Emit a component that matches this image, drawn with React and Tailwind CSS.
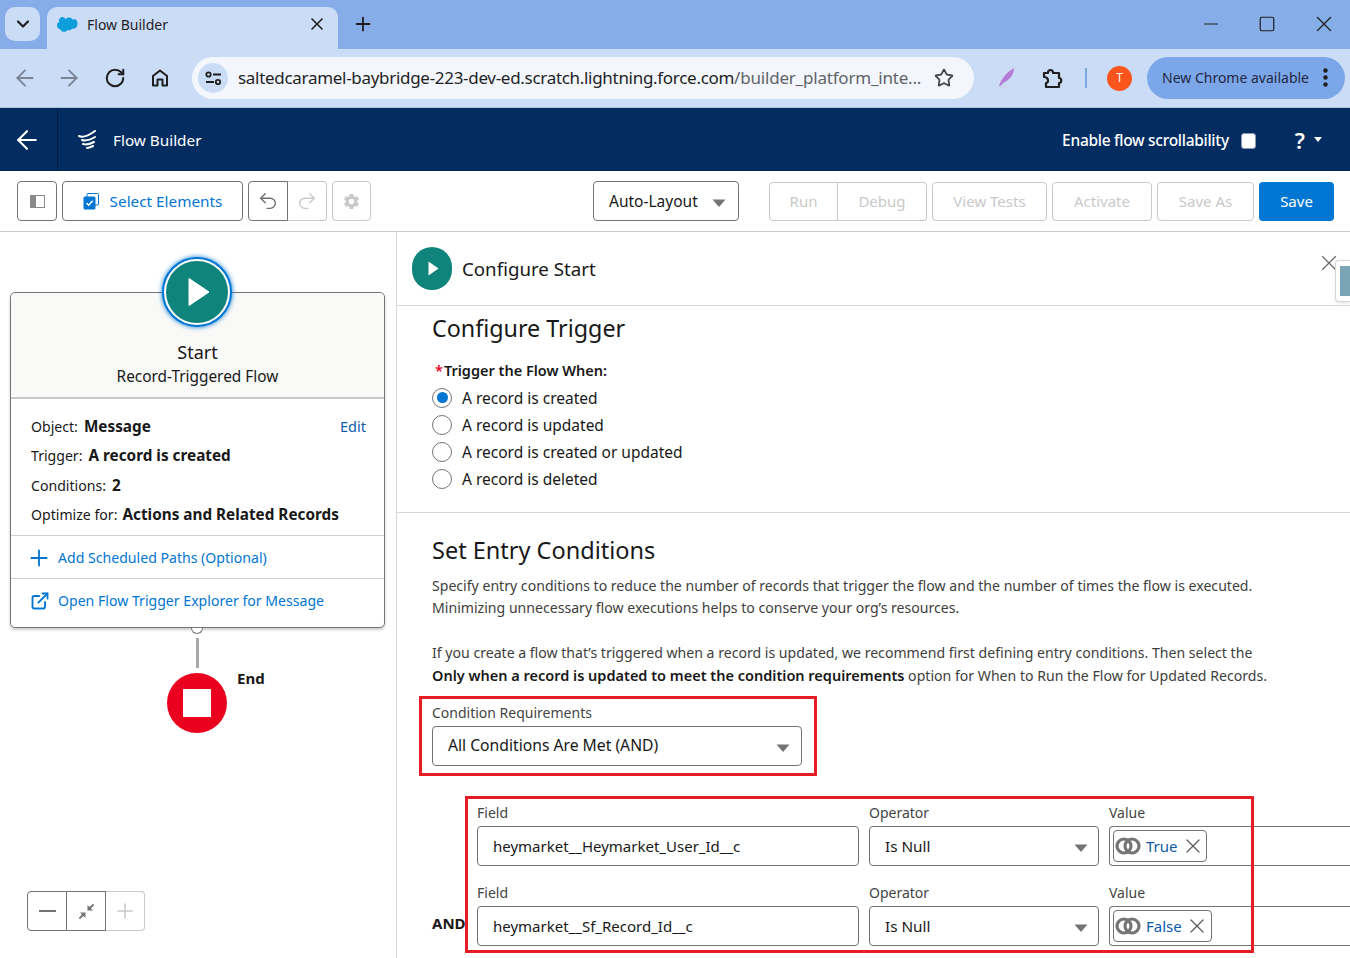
import { ArrowLeft, ArrowRight, ChevronDown, Plus, RotateCw, Star, X, Minus, Square, Undo2, Redo2, ExternalLink } from 'lucide-react';
import { MdSettings } from 'react-icons/md';

const FONT = "font-['Noto_Sans','Open_Sans',sans-serif]";

function Caret({ className = '' }) {
  return <svg width="14" height="8" viewBox="0 0 14 8" className={className}><path d="M0.5 0.5h13L7 8z" fill="#747474" /></svg>;
}

function Radio({ label, checked }) {
  return (
    <div className="flex items-center h-[27px]">
      <span className={`w-5 h-5 rounded-full border border-[#747474] flex items-center justify-center ${checked ? 'border-[#0176d3]' : ''}`}>
        {checked && <span className="w-[11px] h-[11px] rounded-full bg-[#0176d3]" />}
      </span>
      <span className="ml-[10px] pt-[3px] text-[15.5px] text-[#181818]">{label}</span>
    </div>
  );
}

function BoxBtn({ children, className = '' }) {
  return <div className={`h-10 border border-[#747474] rounded flex items-center justify-center ${className}`}>{children}</div>;
}

function Disabled({ children, w }) {
  return <div className={`h-[39px] border border-[#c9c9c9] rounded flex items-center justify-center text-[15px] text-[#c9c9c9] ${w}`}>{children}</div>;
}

function GlobalIcon() {
  return (
    <svg width="26" height="18" viewBox="0 0 26 18" fill="none" stroke="#747474" strokeWidth="3.2">
      <circle cx="9" cy="9" r="7" />
      <circle cx="17" cy="9" r="7" />
    </svg>
  );
}

function ConditionRow({ field, value, chipW }) {
  return (
    <div className="flex h-[80px]">
      <div className="w-[382px]">
        <div className="text-[14px] leading-5 text-[#444] pt-[6px] h-[29px]">Field</div>
        <div className="h-10 w-[382px] border border-[#747474] rounded flex items-center pl-[15px] text-[15px] text-[#181818]">{field}</div>
      </div>
      <div className="w-[230px] ml-[10px]">
        <div className="text-[14px] leading-5 text-[#444] pt-[6px] h-[29px]">Operator</div>
        <div className="h-10 w-[230px] border border-[#747474] rounded flex items-center justify-between pl-[15px] pr-[10px] text-[15.3px] text-[#181818]">
          Is Null
          <Caret className="mt-[4px]" />
        </div>
      </div>
      <div className="ml-[10px] flex-1">
        <div className="text-[14px] leading-5 text-[#444] pt-[6px] h-[29px]">Value</div>
        <div className="h-10 border border-[#747474] border-r-0 rounded-l flex items-center pl-[3px]">
          <div className={`h-8 border border-[#747474] rounded flex items-center pl-[1px] ${chipW}`}>
            <GlobalIcon />
            <span className="ml-[5px] text-[15px] text-[#0b5cab]">{value}</span>
            <X size={24} strokeWidth={1.2} className="ml-[3px] text-[#5c5c5c]" />
          </div>
        </div>
      </div>
    </div>
  );
}

export default function App() {
  return (
    <div className={`w-[1350px] h-[958px] overflow-hidden bg-white text-[#181818] ${FONT}`}>
      {/* tab strip */}
      <div className="h-[49px] bg-[#87ade9] flex items-start pl-[5px] relative">
        <div className="mt-[7px] w-[35px] h-[34px] rounded-[10px] bg-[#cbdcf6] flex items-center justify-center">
          <ChevronDown size={20} strokeWidth={2.6} className="text-[#1f1f1f]" />
        </div>
        <div className="ml-[7px] mt-[7px] w-[291px] h-[42px] bg-[#cbdcf6] rounded-t-[10px] flex items-center pl-[10px] pb-[8px]">
          <svg width="21" height="15" viewBox="0 0 21 15"><path d="M8.5 2.2C9.4 1 10.700.5 12 .5c1.600 0 3 .9 3.700 2.200.7-.3 1.300-.4 2-.4 1.700 0 2.800 2 2.800 4.400s-1.500 5-4.200 5c-.4 0-.8 0-1.200-.2-.6 1.100-1.800 1.800-3 1.800-.6 0-1.100-.1-1.600-.4C9.900 14 8.500 14.800 7 14.800c-1.600 0-3-1-3.500-2.400C1.600 12.200 0 10.700 0 8.500c0-1.600.9-3 2.200-3.700C2 4.300 2 3.800 2 3.300 2 1.500 3.700 0 5.600 0 6.700 0 7.800.8 8.500 2.200z" fill="#0d9dda" /></svg>
          <span className="ml-[9px] text-[14px] text-[#1f1f1f]">Flow Builder</span>
          <X size={20} strokeWidth={2} className="ml-auto mr-[11px] text-[#1f1f1f]" />
        </div>
        <Plus size={22} strokeWidth={2} className="ml-[14px] mt-[13px] text-[#1f1f1f]" />
        <div className="ml-auto flex items-center h-[26px] mt-[11px] text-[#1f1f1f]">
          <Minus size={22} strokeWidth={1.3} className="mr-[36px]" />
          <Square size={18} strokeWidth={1.6} className="mr-[35px]" />
          <X size={26} strokeWidth={1.2} className="mr-[13px]" />
        </div>
      </div>

      {/* address bar */}
      <div className="h-[59px] bg-[#cbdcf6] border-b border-[#aebfd8] flex items-center relative">
        <ArrowLeft size={26} strokeWidth={1.7} className="ml-[12px] text-[#7b8494]" />
        <ArrowRight size={26} strokeWidth={1.7} className="ml-[18px] text-[#7b8494]" />
        <RotateCw size={22} strokeWidth={2.2} className="ml-[22px] text-[#1f1f1f]" />
        <svg width="18" height="18" viewBox="0 0 18 18" fill="none" stroke="#1f1f1f" strokeWidth="2" strokeLinejoin="round" className="ml-[25px]"><path d="M2 16.500V7l7-5.500L16 7v9.500h-4.500v-6h-5v6z" /></svg>
        <div className="ml-[23px] w-[782px] h-[42px] bg-[#f3f7fd] rounded-full flex items-center pl-[6px]">
          <div className="w-[30px] h-[30px] rounded-full bg-[#cbdcf6] flex items-center justify-center">
            <svg width="17" height="15" viewBox="0 0 17 15" fill="none" stroke="#1f1f1f" strokeWidth="1.800"><circle cx="3.500" cy="3.500" r="2.200" /><path d="M8 3.500h8M1 11h8" /><circle cx="13" cy="11" r="2.200" /></svg>
          </div>
          <div className="ml-[10px] text-[17px] tracking-[-0.3px] whitespace-nowrap w-[684px] text-[#1f1f1f]">
            saltedcaramel-baybridge-223-dev-ed.scratch.lightning.force.com<span className="text-[#5f6368] tracking-[-0.2px]">/builder_platform_inte...</span>
          </div>
          <Star size={20} strokeWidth={2.2} className="ml-[12px] text-[#474747]" />
        </div>
        <svg width="18" height="22" viewBox="0 0 18 22" className="ml-[24px]"><path d="M1 19C3 12 9 5 16 1c0 6-4 12-11 15l-2 3z" fill="#b57bd6" /><path d="M1 20c4 1 9 1 13-1-4 0-8 0-11-1z" fill="#c9d6ec" /></svg>
        <svg width="22" height="22" viewBox="0 0 22 22" fill="none" stroke="#1f1f1f" strokeWidth="2.200" strokeLinejoin="round" className="ml-[26px]"><path d="M2 6h4c0-4 5-4 5 0h6v5c3 0 3 5 0 5v4H4v-4c3 0 3-6-2-6z" /></svg>
        <div className="ml-[21px] w-[2px] h-[20px] bg-[#7fa7e0]" />
        <div className="ml-[20px] w-[25px] h-[25px] rounded-full bg-[#fb541d] text-white text-[12px] flex items-center justify-center">T</div>
        <div className="ml-[15px] w-[198px] h-[42px] rounded-full bg-[#7ba6e8] flex items-center pl-[15px] pb-[1px] text-[14px] whitespace-nowrap text-[#1f2a44]">
          New Chrome available
          <svg width="5" height="19" viewBox="0 0 5 19" className="ml-[14px]"><circle cx="2.500" cy="2.500" r="2.200" fill="#1f1f1f" /><circle cx="2.500" cy="9.500" r="2.200" fill="#1f1f1f" /><circle cx="2.500" cy="16.500" r="2.200" fill="#1f1f1f" /></svg>
        </div>
      </div>

      {/* salesforce header */}
      <div className="h-[63px] bg-[#032d60] flex items-center text-white">
        <div className="w-[58px] h-full border-r border-[#021f44] flex items-center justify-center">
          <ArrowLeft size={30} strokeWidth={1.7} className="-ml-[4px]" />
        </div>
        <svg width="20" height="19" viewBox="0 0 20 19" fill="none" stroke="white" strokeWidth="2" strokeLinecap="round" className="ml-[20px]"><path d="M1 6c4 2 9 0 16-5M4 10c3 1 8 0 13-3M5 14c3 1 7 0 11-2M9 18c2 0 4-1 6-2" /></svg>
        <span className="ml-[15px] pt-[1px] text-[15.3px]">Flow Builder</span>
        <span className="ml-auto pt-[2px] text-[15.500px] font-medium tracking-[-0.28px]">Enable flow scrollability</span>
        <div className="ml-[12px] mt-[2px] w-[15px] h-4 rounded-[3px] bg-white border border-[#8a9ab0]" />
        <span className="ml-[39px] text-[22px] font-semibold leading-none">?</span>
        <svg width="8" height="5" viewBox="0 0 8 5" className="ml-[9px] mr-[28px]"><path d="M0 0h8L4 5z" fill="white" /></svg>
      </div>

      {/* builder toolbar */}
      <div className="h-[61px] border-b border-[#c9c9c9] flex items-center pl-[17px]">
        <BoxBtn className="w-10">
          <svg width="15" height="13" viewBox="0 0 15 13"><rect x="0.500" y="0.500" width="14" height="12" fill="none" stroke="#8a8a8a" /><rect x="1" y="1" width="5" height="11" fill="#8a8a8a" /></svg>
        </BoxBtn>
        <BoxBtn className="w-[181px] ml-[5px]">
          <svg width="16" height="17" viewBox="0 0 16 17" className="mr-[11px]"><rect x="4" y="0.500" width="11.500" height="11.500" rx="1" fill="none" stroke="#0176d3" /><rect x="0.500" y="3.500" width="12" height="13" rx="1.500" fill="#0176d3" /><path d="M3.500 10l2.200 2.200 4-4.400" fill="none" stroke="white" strokeWidth="1.500" /></svg>
          <span className="text-[15.3px] text-[#0176d3]">Select Elements</span>
        </BoxBtn>
        <div className="flex ml-[5px]">
          <div className="w-10 h-10 border border-[#747474] rounded-l flex items-center justify-center">
            <Undo2 size={22} strokeWidth={1.500} className="text-[#706e6b]" />
          </div>
          <div className="w-[39px] h-10 border border-l-0 border-[#c9c9c9] rounded-r flex items-center justify-center">
            <Redo2 size={22} strokeWidth={1.500} className="text-[#c9c9c9]" />
          </div>
        </div>
        <div className="ml-[5px] w-[39px] h-10 border border-[#c9c9c9] rounded flex items-center justify-center">
          <MdSettings size={19} className="text-[#c9c9c9]" />
        </div>
        <div className="h-10 w-[146px] ml-[222px] border border-[#747474] rounded flex items-center justify-between pl-[15px] pr-[12px] pt-[1px] text-[15.500px]">
          Auto-Layout
          <Caret className="mt-[3px]" />
        </div>
        <div className="ml-[30px] flex">
          <div className="w-[69px] h-[39px] border border-[#c9c9c9] rounded-l flex items-center justify-center text-[15px] text-[#c9c9c9]">Run</div>
          <div className="w-[89px] h-[39px] border border-l-0 border-[#c9c9c9] rounded-r flex items-center justify-center text-[15px] text-[#c9c9c9]">Debug</div>
        </div>
        <div className="ml-[5px] flex gap-[5px]">
          <Disabled w="w-[115px]">View Tests</Disabled>
          <Disabled w="w-[100px]">Activate</Disabled>
          <Disabled w="w-[97px]">Save As</Disabled>
        </div>
        <div className="ml-[5px] w-[75px] h-[39px] rounded bg-[#0176d3] text-white text-[15px] flex items-center justify-center">Save</div>
      </div>

      <div className="flex h-[726px]">
        {/* canvas */}
        <div className="w-[397px] h-full border-r border-[#d8d8d8] relative shrink-0">
          <div className="absolute left-[10px] top-[60px] w-[375px] h-[336px] border border-[#747474] rounded-[5px] bg-white shadow-[0_2px_3px_rgba(0,0,0,0.2)] flex flex-col">
            <div className="h-[106px] shrink-0 bg-[#f9f9f7] rounded-t-[5px] border-b-2 border-[#c9c9c9] flex flex-col items-center justify-end pb-[9px]">
              <div className="text-[18px] leading-6 mb-[2px] text-[#181818]">Start</div>
              <div className="text-[15.400px] leading-[22px] text-[#181818]">Record-Triggered Flow</div>
            </div>
            <div className="h-[137px] shrink-0 border-b border-[#d0d0d0] pl-[20px] pr-[18px] pt-[13px] text-[14.100px] leading-[29.300px]">
              <div className="flex justify-between"><span>Object:<b className="ml-[6px] text-[15.300px] font-bold">Message</b></span><span className="text-[#0b5cab] text-[14.500px]">Edit</span></div>
              <div>Trigger:<b className="ml-[6px] text-[15.300px] font-bold">A record is created</b></div>
              <div>Conditions:<b className="ml-[6px] text-[15.300px] font-bold">2</b></div>
              <div>Optimize for:<b className="ml-[5px] text-[15.300px] font-bold">Actions and Related Records</b></div>
            </div>
            <div className="h-[43px] shrink-0 border-b border-[#d0d0d0] pl-[20px] pt-[1px] flex items-center text-[14.100px] text-[#0176d3]">
              <Plus size={26} strokeWidth={1.700} className="-ml-[5px]" />
              <span className="ml-[6px]">Add Scheduled Paths (Optional)</span>
            </div>
            <div className="flex-1 pl-[20px] flex items-center pb-[4px] text-[14.100px] text-[#0176d3]">
              <ExternalLink size={20} strokeWidth={2.200} className="-ml-[1px]" />
              <span className="ml-[8px]">Open Flow Trigger Explorer for Message</span>
            </div>
          </div>
          <div className="absolute left-[162px] top-[25px] w-[70px] h-[70px] rounded-full bg-white border-2 border-[#0176d3] shadow-[0_0_5px_#0176d3] flex items-center justify-center">
            <div className="w-[62px] h-[62px] rounded-full bg-[#0f847b] flex items-center justify-center">
              <svg width="22" height="30" viewBox="0 0 22 30" className="ml-[4px]"><path d="M1 1.500v27L21 15z" fill="white" stroke="white" strokeLinejoin="round" strokeWidth="1" /></svg>
            </div>
          </div>
          <div className="absolute left-[191px] top-[396px] w-3 h-[6px] rounded-b-full border border-t-0 border-[#747474] bg-white" />
          <div className="absolute left-[196px] top-[406px] w-[3px] h-[30px] bg-[#a8a8a8]" />
          <div className="absolute left-[167px] top-[441px] w-[60px] h-[60px] rounded-full bg-[#ea001e] flex items-center justify-center">
            <div className="w-7 h-7 bg-white" />
          </div>
          <div className="absolute left-[237px] top-[435px] text-[15px] font-bold">End</div>
          <div className="absolute left-[27px] top-[659px] flex">
            <div className="w-10 h-10 border border-[#747474] rounded-l flex items-center justify-center">
              <div className="w-[17px] h-[2px] bg-[#747474]" />
            </div>
            <div className="w-[39px] h-10 border border-l-0 border-[#747474] flex items-center justify-center">
              <svg width="17" height="17" viewBox="0 0 17 17" fill="#747474"><path d="M9.500 7.500V2l2 2L15 .8 16.200 2l-3.200 3.500 2 2zM7.500 9.500V15l-2-2L2 16.200.8 15l3.200-3.500-2-2z" /></svg>
            </div>
            <div className="w-[39px] h-10 border border-l-0 border-[#c9c9c9] rounded-r flex items-center justify-center">
              <Plus size={24} strokeWidth={1.500} className="text-[#c9c9c9]" />
            </div>
          </div>
        </div>

        {/* config panel */}
        <div className="flex-1 relative min-w-0">
          <div className="h-[74px] border-b border-[#d8d8d8] flex items-center pl-[15px]">
            <div className="w-10 h-[43px] rounded-full bg-[#0f847b] flex items-center justify-center">
              <svg width="11" height="15" viewBox="0 0 11 15" className="ml-[2px]"><path d="M0.500 0.500v14L10.500 7.500z" fill="white" /></svg>
            </div>
            <span className="ml-[10px] pt-[1px] text-[18.700px] text-[#181818]">Configure Start</span>
          </div>
          <X size={26} strokeWidth={1.200} className="absolute right-[8px] top-[18px] text-[#706e6b]" />
          <div className="absolute right-0 top-[28px] w-[15px] h-[42px] bg-white border border-r-0 border-[#d8d8d8] rounded-l shadow-sm pl-[4px] py-[5px]">
            <div className="w-full h-[30px] bg-[#7aa5b5]" />
          </div>

          <div className="h-[207px] border-b border-[#d8d8d8] pl-[35px]">
            <div className="pt-[4px] text-[23.300px] leading-[36px] text-[#181818]">Configure Trigger</div>
            <div className="mt-[14px] text-[14.500px] font-semibold leading-5"><span className="text-[#ea001e] ml-[3px] mr-[1px]">*</span>Trigger the Flow When:</div>
            <div className="mt-[4px]">
              <Radio label="A record is created" checked />
              <Radio label="A record is updated" />
              <Radio label="A record is created or updated" />
              <Radio label="A record is deleted" />
            </div>
          </div>

          <div className="pl-[35px]">
            <div className="pt-[19px] text-[23.500px] leading-[36px] text-[#181818]">Set Entry Conditions</div>
            <div className="mt-[7px] text-[14.100px] leading-[22px] text-[#3e3e3c] whitespace-nowrap">
              <p>Specify entry conditions to reduce the number of records that trigger the flow and the number of times the flow is executed.</p>
              <p>Minimizing unnecessary flow executions helps to conserve your org’s resources.</p>
              <p className="mt-[23px]">If you create a flow that’s triggered when a record is updated, we recommend first defining entry conditions. Then select the</p>
              <p><b className="text-[14.500px] font-semibold text-[#181818]">Only when a record is updated to meet the condition requirements</b> option for When to Run the Flow for Updated Records.</p>
            </div>
            <div className="relative mt-[16px] w-[370px]">
              <div className="text-[14px] leading-5 text-[#444]">Condition Requirements</div>
              <div className="mt-[3px] h-10 border border-[#747474] rounded flex items-center justify-between pl-[15px] pr-[11px] text-[15.700px]">
                All Conditions Are Met (AND)
                <Caret className="mt-[4px]" />
              </div>
              <div className="absolute -left-[13px] -top-[7px] w-[398px] h-[80px] border-[3px] border-[#e81c24]" />
            </div>
            <div className="relative mt-[31px] ml-[45px]">
              <ConditionRow field="heymarket__Heymarket_User_Id__c" value="True" chipW="w-[94px]" />
              <ConditionRow field="heymarket__Sf_Record_Id__c" value="False" chipW="w-[99px]" />
              <div className="absolute -left-[45px] top-[116px] text-[15px] font-bold leading-5">AND</div>
              <div className="absolute -left-[12px] -top-[1px] w-[789px] h-[157px] border-[3px] border-[#e81c24]" />
            </div>
          </div>
        </div>
      </div>
    </div>
  );
}
